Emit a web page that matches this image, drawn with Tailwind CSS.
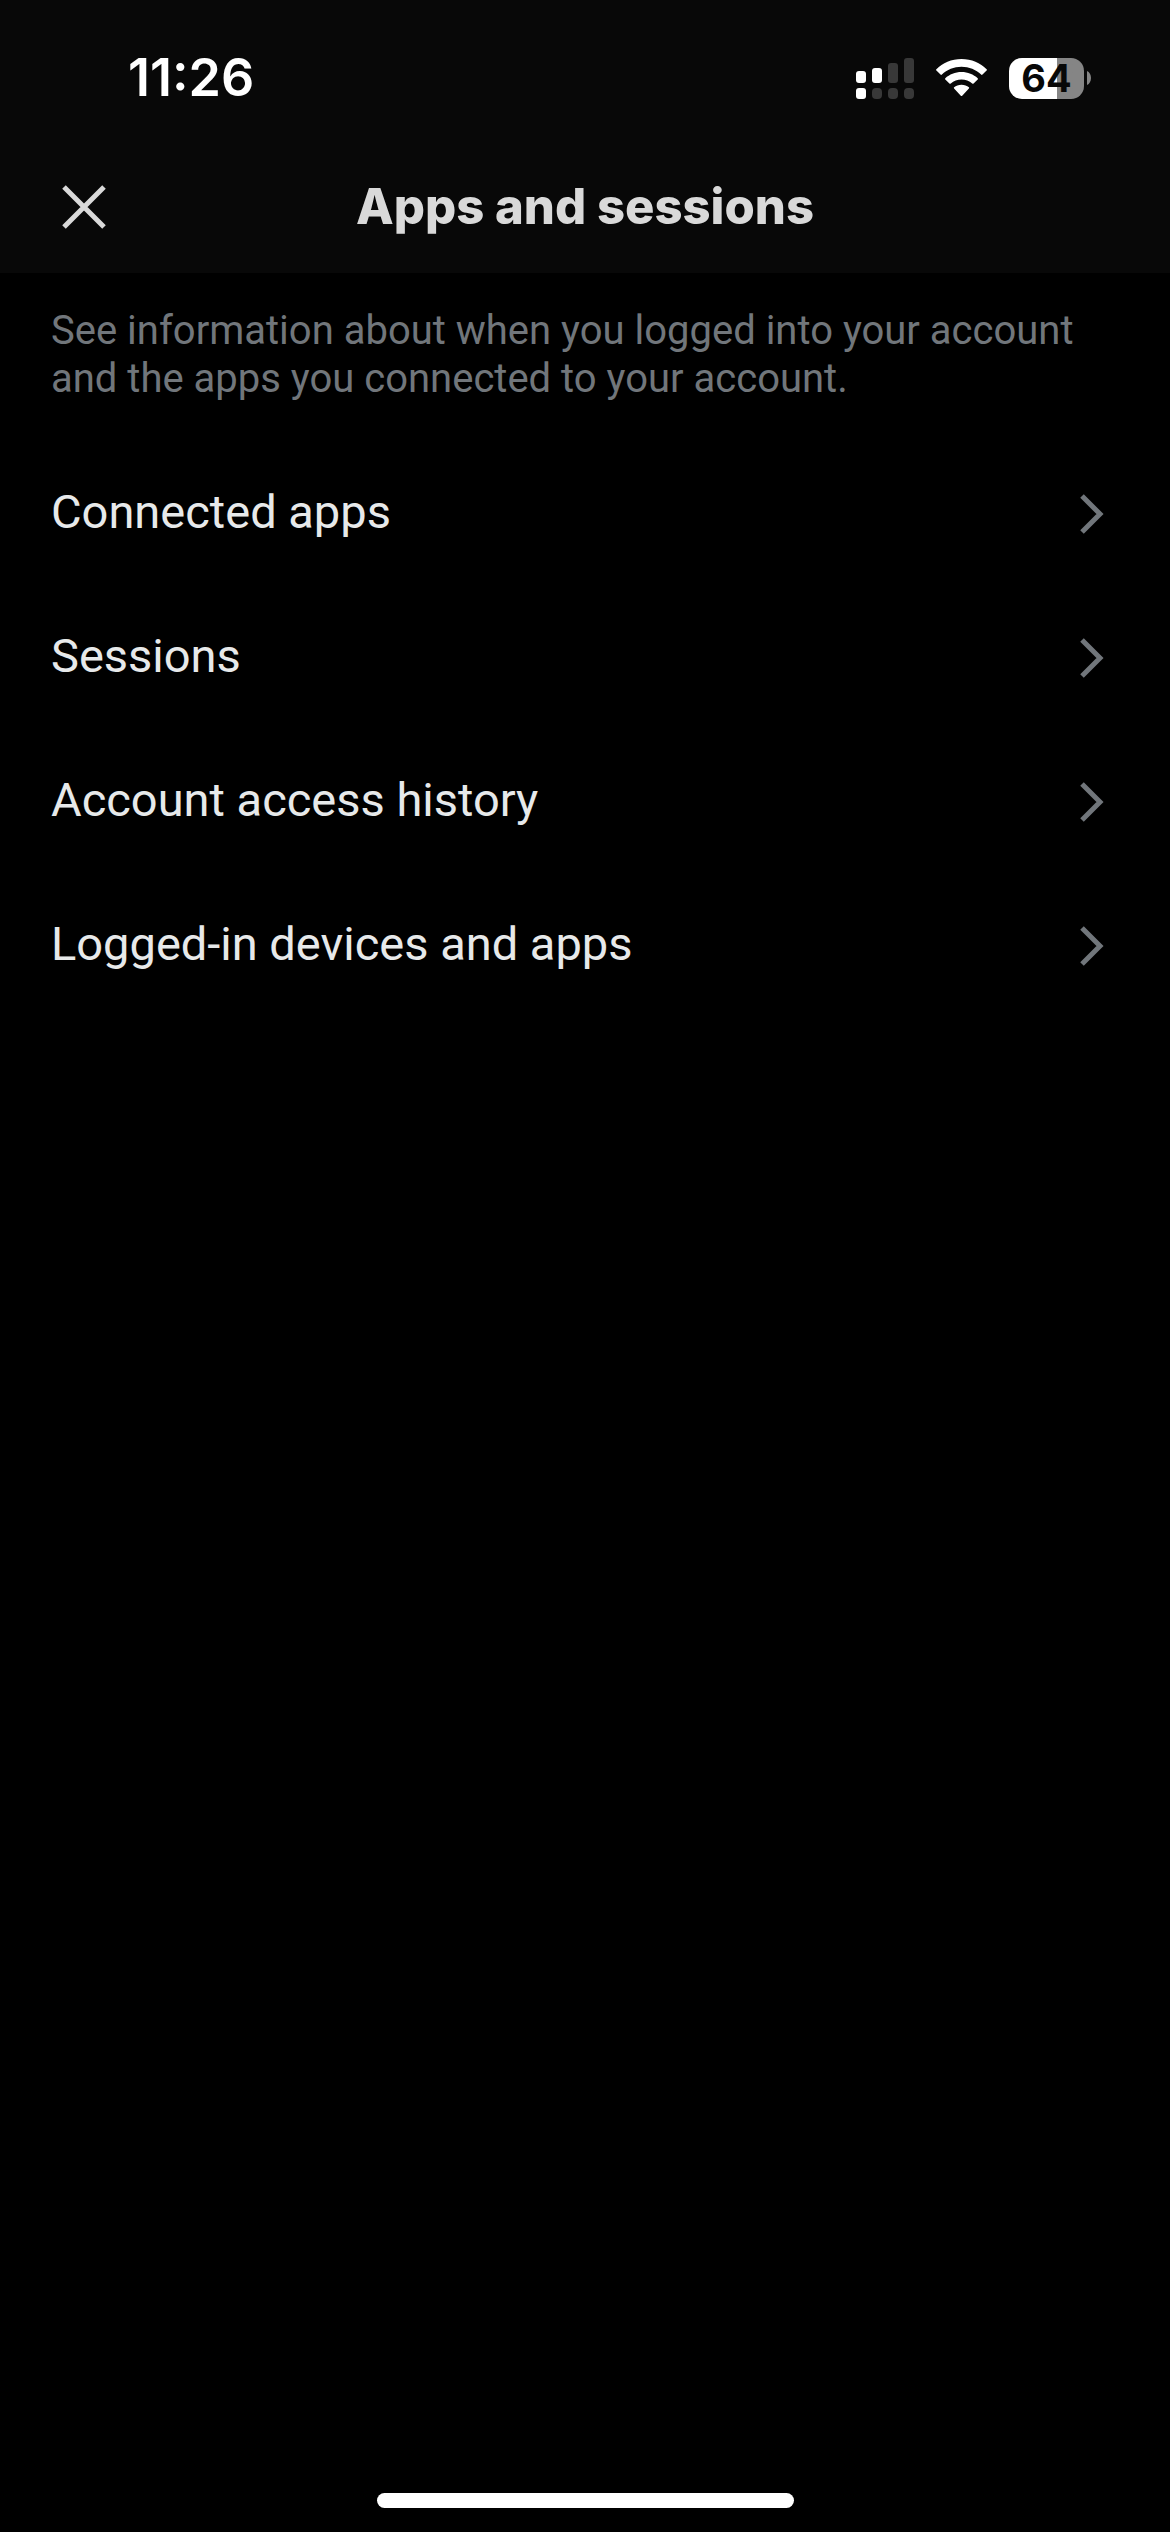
<!DOCTYPE html>
<html lang="en">
<head>
<meta charset="utf-8">
<meta name="viewport" content="width=device-width, initial-scale=1">
<title>Apps and sessions</title>
<script src="https://cdn.jsdelivr.net/npm/@tailwindcss/browser@4"></script>
</head>
<body class="flex min-h-screen flex-col bg-black font-['Roboto',sans-serif] text-[#e7e9ea]">
  <header class="bg-[#080808]">
    <div class="flex h-[141px] items-center justify-between pt-[15px] pr-[79px] pl-[128px] font-['Inter',sans-serif] text-white">
      <time class="text-[52px] leading-[60px] font-semibold">11:26</time>
      <div class="flex items-center gap-[22px]">
        <svg class="h-[41px] w-[58px]" viewBox="0 0 58 41" fill="#383838" role="img" aria-label="Signal strength">
          <rect x="0" y="13" width="10" height="12" rx="3" fill="#fff"/>
          <rect x="16" y="10" width="10" height="15" rx="3" fill="#fff"/>
          <rect x="32" y="5" width="10" height="20" rx="3"/>
          <rect x="48" y="0" width="10" height="25" rx="3"/>
          <rect x="0" y="30" width="10" height="11" rx="3" fill="#fff"/>
          <rect x="16" y="30" width="10" height="11" rx="4"/>
          <rect x="32" y="30" width="10" height="11" rx="4"/>
          <rect x="48" y="30" width="10" height="11" rx="4"/>
        </svg>
        <svg class="h-[38px] w-[51px]" viewBox="0 0 51 38" fill="#fff" role="img" aria-label="Wi-Fi">
          <path d="M25.500 0C35.500 0 44.400 4 50.600 10.200Q51.300 10.900 50.600 11.600L46.500 15.600Q45.800 16.200 45.100 15.600C40 10.700 33 7.800 25.500 7.800S11 10.700 5.900 15.600Q5.200 16.200 4.500 15.600L.4 11.600Q-.3 10.900.4 10.200C6.600 4 15.500 0 25.500 0Z"/>
          <path d="M25.500 13C31.800 13 37.500 15.400 41.700 19.200Q42.300 19.900 41.700 20.500L37.600 24.500Q36.900 25.100 36.200 24.500C33.300 22.100 29.600 20.600 25.500 20.600S17.700 22.100 14.800 24.500Q14.100 25.100 13.400 24.500L9.300 20.500Q8.700 19.900 9.300 19.200C13.500 15.400 19.200 13 25.500 13Z"/>
          <path d="M25.500 25.800C28.400 25.800 31 26.700 32.900 28.300Q33.500 28.900 32.900 29.500L26.200 36.800Q25.500 37.400 24.800 36.800L18.100 29.500Q17.500 28.900 18.100 28.300C20 26.700 22.600 25.800 25.500 25.800Z"/>
        </svg>
        <div class="flex items-center gap-[3px]">
          <div class="flex h-[41px] w-[75px] items-center justify-center rounded-[13px] bg-linear-to-r from-white from-[64%] to-[#858585] to-[64%] text-[38px] leading-[41px] font-bold text-[#080808]">64</div>
          <svg class="h-[14px] w-[4px]" viewBox="0 0 4 14" fill="#858585" aria-hidden="true"><path d="M0 0C2.500 1 4 4 4 7S2.500 13 0 14Z"/></svg>
        </div>
      </div>
    </div>
    <div class="grid h-[132px] grid-cols-[1fr_auto_1fr] items-center px-[51px]">
      <button type="button" aria-label="Close" class="flex size-[66px] items-center justify-center text-[#d9d9d9]">
        <svg class="size-[44px]" viewBox="0 0 44 44" fill="none" stroke="currentColor" stroke-width="5" aria-hidden="true"><path d="M2 2L42 42M42 2L2 42"/></svg>
      </button>
      <h1 class="font-['Inter',sans-serif] text-[49px] leading-[60px] font-extrabold text-[#d9d9d9]">Apps and sessions</h1>
    </div>
  </header>
  <main class="flex-1">
    <p class="px-[51px] pt-[34px] pb-[37px] text-[40px] leading-[48px] text-[#71767b]">See information about when you logged into your account and the apps you connected to your account.</p>
    <nav aria-label="Apps and sessions" class="flex flex-col text-[47px] leading-[56px]">
      <a href="#connected-apps" class="flex h-[144px] items-center justify-between pr-[66px] pl-[51px]">Connected apps
        <svg class="mt-[4px] h-[40px] w-[24px] text-[#71767b]" viewBox="0 0 24 40" fill="none" stroke="currentColor" stroke-width="5" aria-hidden="true"><path d="M2 2L20 20L2 38"/></svg></a>
      <a href="#sessions" class="flex h-[144px] items-center justify-between pr-[66px] pl-[51px]">Sessions
        <svg class="mt-[4px] h-[40px] w-[24px] text-[#71767b]" viewBox="0 0 24 40" fill="none" stroke="currentColor" stroke-width="5" aria-hidden="true"><path d="M2 2L20 20L2 38"/></svg></a>
      <a href="#access-history" class="flex h-[144px] items-center justify-between pr-[66px] pl-[51px]">Account access history
        <svg class="mt-[4px] h-[40px] w-[24px] text-[#71767b]" viewBox="0 0 24 40" fill="none" stroke="currentColor" stroke-width="5" aria-hidden="true"><path d="M2 2L20 20L2 38"/></svg></a>
      <a href="#devices" class="flex h-[144px] items-center justify-between pr-[66px] pl-[51px]">Logged-in devices and apps
        <svg class="mt-[4px] h-[40px] w-[24px] text-[#71767b]" viewBox="0 0 24 40" fill="none" stroke="currentColor" stroke-width="5" aria-hidden="true"><path d="M2 2L20 20L2 38"/></svg></a>
    </nav>
  </main>
  <footer class="flex justify-center pb-[24px]">
    <div class="h-[15px] w-[417px] rounded-full bg-white"></div>
  </footer>
</body>
</html>
